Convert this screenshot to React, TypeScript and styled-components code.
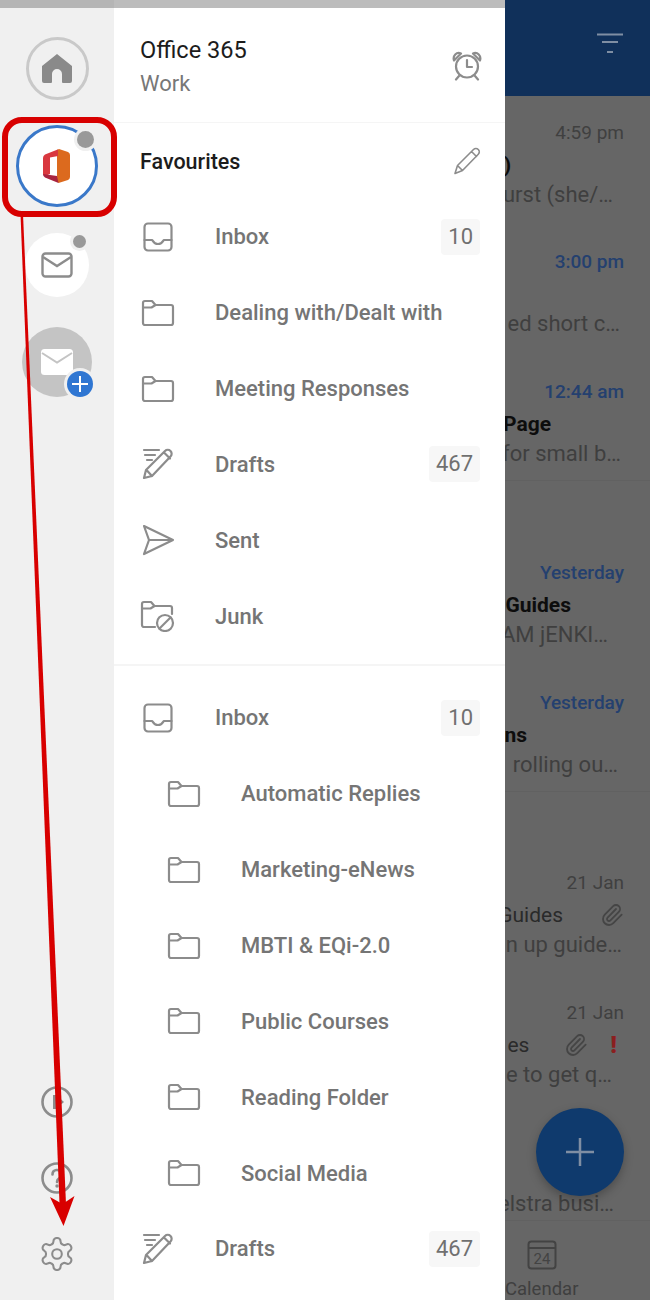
import styled, { createGlobalStyle } from 'styled-components';
import { Paperclip } from 'lucide-react';
import type { ReactNode } from 'react';

const GlobalStyle = createGlobalStyle`
  html, body {
    margin: 0;
    padding: 0;
    background: #ffffff;
  }

  * {
    box-sizing: border-box;
  }
`;

const Page = styled.div`
  position: relative;
  display: flex;
  width: 650px;
  height: 1300px;
  overflow: hidden;
  font-family: Roboto, 'Liberation Sans', sans-serif;
`;

const Rail = styled.aside`
  flex: 0 0 114px;
  display: flex;
  flex-direction: column;
  align-items: center;
  background: #f0f0f0;
`;

const StatusStrip = styled.div<{ $tone: string }>`
  flex: 0 0 8px;
  align-self: stretch;
  background: ${({ $tone }) => $tone};
`;

const RailAccounts = styled.div`
  flex: 1;
  display: flex;
  flex-direction: column;
  align-items: center;
  padding-top: 29px;
`;

const HomeButton = styled.div`
  width: 63px;
  height: 63px;
  border: 3px solid #c9c9c9;
  border-radius: 50%;
  display: flex;
  align-items: center;
  justify-content: center;
`;

const AccountButton = styled.div`
  position: relative;
  width: 82px;
  height: 82px;
  margin-top: 25px;
  border: 3px solid #3a78c9;
  border-radius: 50%;
  background: #ffffff;
  display: flex;
  align-items: center;
  justify-content: center;
`;

const MailButton = styled.div`
  position: relative;
  width: 64px;
  height: 64px;
  margin-top: 26px;
  border-radius: 50%;
  background: #ffffff;
  display: flex;
  align-items: center;
  justify-content: center;
`;

const AddButton = styled.div`
  position: relative;
  width: 70px;
  height: 70px;
  margin-top: 30px;
  border-radius: 50%;
  background: #c4c4c4;
  display: flex;
  align-items: center;
  justify-content: center;
`;

const Dot = styled.span<{ $size: number; $top: number; $right: number }>`
  position: absolute;
  top: ${({ $top }) => $top}px;
  right: ${({ $right }) => $right}px;
  width: ${({ $size }) => $size}px;
  height: ${({ $size }) => $size}px;
  border-radius: 50%;
  background: #999999;
  box-shadow: 0 0 0 3px #f0f0f0;
`;

const PlusBadge = styled.span`
  position: absolute;
  right: -1px;
  bottom: 0;
  width: 26px;
  height: 26px;
  border-radius: 50%;
  background: #2f76d2;
  box-shadow: 0 0 0 3px #f0f0f0;
  display: flex;
  align-items: center;
  justify-content: center;
`;

const RailTools = styled.div`
  display: flex;
  flex-direction: column;
  align-items: center;
  gap: 44px;
  padding-bottom: 30px;
`;

const Drawer = styled.nav`
  flex: 0 0 391px;
  display: flex;
  flex-direction: column;
  background: #ffffff;
`;

const AccountHeader = styled.header`
  height: 115px;
  padding: 26px 23px 0 26px;
  display: flex;
  justify-content: space-between;
  align-items: flex-start;
  border-bottom: 1px solid #f5f5f5;
`;

const AccountName = styled.div`
  font-size: 23.6px;
  line-height: 32px;
  color: #1c1c1c;
`;

const AccountKind = styled.div`
  margin-top: 2px;
  font-size: 22px;
  line-height: 32px;
  color: #777777;
`;

const AlarmSlot = styled.div`
  padding-top: 17px;
`;

const SectionHead = styled.div`
  height: 76px;
  padding: 0 24px 0 26px;
  display: flex;
  align-items: center;
  justify-content: space-between;
  font-size: 21.5px;
  font-weight: 500;
  color: #1c1c1c;
`;

const FolderRow = styled.div<{ $nested?: boolean }>`
  height: 75.85px;
  padding: 0 25px 0 ${({ $nested }) => ($nested ? 52 : 26)}px;
  display: flex;
  align-items: center;
  font-size: 22px;
  font-weight: 500;
  color: #757575;
`;

const IconSlot = styled.span`
  flex: 0 0 36px;
  height: 36px;
  margin-right: 39px;
  display: flex;
  align-items: center;
  justify-content: center;
`;

const FolderName = styled.span`
  flex: 1;
  white-space: nowrap;
`;

const CountBadge = styled.span`
  height: 36px;
  padding: 0 7px;
  border-radius: 4px;
  background: #f7f7f7;
  font-size: 22px;
  font-weight: 400;
  line-height: 36px;
  color: #707070;
`;

const Divider = styled.hr`
  margin: 10px 0 14px;
  border: 0;
  border-top: 2px solid #f5f5f5;
`;

const MessagePane = styled.main`
  position: relative;
  flex: 1;
  min-width: 0;
  display: flex;
  flex-direction: column;
  overflow: hidden;
  background: #666666;
`;

const PaneHeader = styled.div`
  flex: 0 0 96px;
  padding: 33px 26px 0 0;
  display: flex;
  justify-content: flex-end;
  align-items: flex-start;
  background: #10305a;
`;

const MessageRow = styled.article<{ $ruled?: boolean; $first?: boolean }>`
  height: ${({ $first }) => ($first ? 126 : 129.5)}px;
  padding-top: ${({ $first }) => ($first ? 23 : 26)}px;
  display: flex;
  flex-direction: column;
  flex-shrink: 0;
  border-bottom: ${({ $ruled }) => ($ruled ? '1px solid #616161' : '0')};
`;

const GroupGap = styled.div<{ $height: number }>`
  flex: 0 0 ${({ $height }) => $height}px;
`;

const TimeLine = styled.div<{ $unread?: boolean }>`
  height: 28px;
  padding-right: 26px;
  text-align: right;
  font-size: 19px;
  line-height: 28px;
  font-weight: ${({ $unread }) => ($unread ? 500 : 400)};
  color: ${({ $unread }) => ($unread ? '#24406f' : '#404040')};
`;

const TitleLine = styled.div<{ $inset: number; $unread?: boolean; $drop?: number }>`
  height: 30px;
  margin-top: ${({ $drop }) => $drop ?? 3}px;
  padding-right: ${({ $inset }) => $inset}px;
  display: flex;
  justify-content: flex-end;
  align-items: center;
  white-space: nowrap;
  font-size: 21px;
  font-weight: ${({ $unread }) => ($unread ? 700 : 400)};
  color: ${({ $unread }) => ($unread ? '#0d0d0d' : '#2a2a2a')};
`;

const TitleText = styled.span<{ $gap: number }>`
  flex-shrink: 0;
  margin-right: ${({ $gap }) => $gap}px;
`;

const ClipIcon = styled(Paperclip)`
  flex-shrink: 0;
  color: #454545;
`;

const PreviewLine = styled.div<{ $inset: number }>`
  height: 30px;
  padding-right: ${({ $inset }) => $inset}px;
  display: flex;
  justify-content: flex-end;
  white-space: nowrap;
  font-size: 22px;
  line-height: 30px;
  color: #3f3f3f;
`;

const Flag = styled.span`
  flex-shrink: 0;
  margin-left: 22px;
  font-size: 24px;
  font-weight: 900;
  color: #8b1f1f;
`;

const Fab = styled.div`
  position: absolute;
  left: 31px;
  top: 1108px;
  width: 88px;
  height: 88px;
  border-radius: 50%;
  background: #0f3a6d;
  box-shadow: 0 4px 10px rgba(0, 0, 0, 0.25);
  display: flex;
  align-items: center;
  justify-content: center;
`;

const TabBar = styled.footer`
  position: absolute;
  left: 0;
  right: 0;
  top: 1220px;
  height: 80px;
  border-top: 1px solid #616161;
  background: #666666;
  padding-top: 19px;
  display: flex;
  flex-direction: column;
  align-items: flex-start;
`;

const TabIcon = styled.div`
  padding-left: 22px;
  height: 32px;
`;

const TabLabel = styled.div`
  margin-top: 5px;
  font-size: 18.5px;
  line-height: 24px;
  color: #3f3f3f;
`;

const Annotation = styled.svg`
  position: absolute;
  inset: 0;
  pointer-events: none;
`;

const stroke = {
  fill: 'none',
  stroke: '#8c8c8c',
  strokeWidth: 2.2,
  strokeLinecap: 'round' as const,
  strokeLinejoin: 'round' as const,
};

const InboxIcon = () => (
  <svg width="32" height="32" viewBox="0 0 32 32">
    <rect x="2.5" y="2.5" width="27" height="27" rx="3.5" {...stroke} />
    <path d="M2.5 19H10c1 0 1 4 6 4s5-4 6-4h7.5" {...stroke} />
  </svg>
);

const FolderIcon = () => (
  <svg width="34" height="28" viewBox="0 0 34 28">
    <path d="M2 24V4a2 2 0 0 1 2-2h7l3.500 4H30a2 2 0 0 1 2 2v16a2 2 0 0 1-2 2H4a2 2 0 0 1-2-2ZM2 8.500h8.500L14.500 6" {...stroke} />
  </svg>
);

const DraftsIcon = () => (
  <svg width="34" height="34" viewBox="0 0 34 34">
    <path d="M3 3h15M4 8h10M6 13h5" {...stroke} />
    <path d="M3 31l2-8L24 4c1.500-1.500 4-1.500 5.500 0s1.500 4 0 5.500L11 29l-8 2ZM5.500 23l5.500 6M23 5.500l6 6" {...stroke} />
  </svg>
);

const SentIcon = () => (
  <svg width="34" height="34" viewBox="0 0 34 34">
    <path d="M3 3l29 14L3 31l5-14L3 3ZM8 17h24" {...stroke} />
  </svg>
);

const JunkIcon = () => (
  <svg width="36" height="32" viewBox="0 0 36 32">
    <path d="M15 27H4a2 2 0 0 1-2-2V4a2 2 0 0 1 2-2h7l3.500 4H30a2 2 0 0 1 2 2v6M2 8.500h8.500L14.500 6" {...stroke} />
    <circle cx="25" cy="23" r="8" {...stroke} />
    <path d="M19.500 28.500l11-11" {...stroke} />
  </svg>
);

const AlarmIcon = () => (
  <svg width="30" height="30" viewBox="0 0 30 30">
    <circle cx="15" cy="15.500" r="11" {...stroke} />
    <path d="M15 9v7h5M7 25l-3 3.500M23 25l3 3.500" {...stroke} />
    <path d="M2 9.500C0.500 5 4.500 0.500 9 2.500L2 9.500ZM28 9.500C29.500 5 25.500 0.500 21 2.500L28 9.500Z" {...stroke} />
  </svg>
);

const PencilIcon = () => (
  <svg width="28" height="28" viewBox="0 0 28 28">
    <path d="M2 26.500l2.500-8L20.500 2.500c1.300-1.300 3.500-1.300 4.800 0s1.300 3.500 0 4.800L9.500 23.500l-7.500 3ZM4.500 18.500l5 5M18.500 4.500l5 5" {...stroke} strokeWidth="1.600" />
  </svg>
);

const HomeIcon = () => (
  <svg width="32" height="32" viewBox="0 0 32 32">
    <path d="M16 1L1 13v15a2 2 0 0 0 2 2h7a1 1 0 0 0 1-1v-8a5 5 0 0 1 10 0v8a1 1 0 0 0 1 1h7a2 2 0 0 0 2-2V13L16 1Z" fill="#8a8a8a" />
  </svg>
);

const OfficeLogo = () => (
  <svg width="28" height="34" viewBox="0 0 28 34">
    <path d="M14 1L16 0L25 3Q27 4 27 6V28Q27 30 25 31L15.500 34L14 32Z" fill="#dc6a1e" />
    <path d="M16 0L2 5.500Q0 6.500 0 9V25Q0 26.500 2 27L7 25V8.500L15 7V0.500Z" fill="#d9383f" />
    <path d="M0 25L14 27L15.500 34L2 28.500Q0 27.500 0 25Z" fill="#a8243f" />
  </svg>
);

const MailOutline = () => (
  <svg width="32" height="26" viewBox="0 0 32 26">
    <rect x="1.500" y="1.500" width="29" height="23" rx="3" fill="none" stroke="#8c8c8c" strokeWidth="2.400" />
    <path d="M2 5l14 9 14-9" fill="none" stroke="#8c8c8c" strokeWidth="2.400" />
  </svg>
);

const MailFilled = () => (
  <svg width="32" height="26" viewBox="0 0 32 26">
    <rect width="32" height="26" rx="3.500" fill="#ffffff" />
    <path d="M1 4l15 9.500L31 4" fill="none" stroke="#c4c4c4" strokeWidth="2" />
  </svg>
);

const PlayTool = () => (
  <svg width="32" height="32" viewBox="0 0 32 32">
    <circle cx="16" cy="16" r="14.500" {...stroke} strokeWidth="2.600" />
    <path d="M12 9h3l8 7-8 7h-3z" fill="#8c8c8c" />
  </svg>
);

const HelpTool = () => (
  <svg width="32" height="32" viewBox="0 0 32 32">
    <circle cx="16" cy="16" r="14.500" {...stroke} strokeWidth="2.600" />
    <path d="M11.500 12.500a4.500 4.500 0 1 1 6.500 4c-1.500.8-2 1.500-2 3.500" {...stroke} strokeWidth="2.600" />
    <circle cx="16" cy="24" r="1.700" fill="#8c8c8c" />
  </svg>
);

const GearTool = () => (
  <svg width="32" height="32" viewBox="2 2 20 20" overflow="visible">
    <path
      d="M12.220 2h-.44a2 2 0 0 0-2 2v.18a2 2 0 0 1-1 1.730l-.43.250a2 2 0 0 1-2 0l-.15-.080a2 2 0 0 0-2.730.730l-.220.380a2 2 0 0 0 .730 2.730l.150.100a2 2 0 0 1 1 1.720v.510a2 2 0 0 1-1 1.740l-.150.090a2 2 0 0 0-.730 2.730l.220.380a2 2 0 0 0 2.730.730l.150-.080a2 2 0 0 1 2 0l.430.250a2 2 0 0 1 1 1.730V20a2 2 0 0 0 2 2h.440a2 2 0 0 0 2-2v-.18a2 2 0 0 1 1-1.730l.430-.250a2 2 0 0 1 2 0l.150.080a2 2 0 0 0 2.730-.730l.220-.390a2 2 0 0 0-.730-2.730l-.150-.080a2 2 0 0 1-1-1.740v-.500a2 2 0 0 1 1-1.740l.150-.090a2 2 0 0 0 .730-2.730l-.220-.380a2 2 0 0 0-2.730-.730l-.150.080a2 2 0 0 1-2 0l-.430-.250a2 2 0 0 1-1-1.730V4a2 2 0 0 0-2-2z"
      {...stroke}
      strokeWidth="1.300"
    />
    <circle cx="12" cy="12" r="3" {...stroke} strokeWidth="1.300" />
  </svg>
);

const FilterIcon = () => (
  <svg width="28" height="22" viewBox="0 0 28 22">
    <path d="M1 1.500h26M6 9h16M11 19h6" fill="none" stroke="#7f8ea3" strokeWidth="2" />
  </svg>
);

const CalendarIcon = () => (
  <svg width="30" height="30" viewBox="0 0 30 30">
    <rect x="1.500" y="1.500" width="27" height="27" rx="3" fill="none" stroke="#434343" strokeWidth="2" />
    <path d="M1.500 8h27" stroke="#434343" strokeWidth="2" />
    <text x="15" y="24" textAnchor="middle" fontSize="15" fontFamily="Roboto, sans-serif" fill="#434343">24</text>
  </svg>
);

type Folder = { name: string; icon: ReactNode; count?: number; nested?: boolean };

const favourites: Folder[] = [
  { name: 'Inbox', icon: <InboxIcon />, count: 10 },
  { name: 'Dealing with/Dealt with', icon: <FolderIcon /> },
  { name: 'Meeting Responses', icon: <FolderIcon /> },
  { name: 'Drafts', icon: <DraftsIcon />, count: 467 },
  { name: 'Sent', icon: <SentIcon /> },
  { name: 'Junk', icon: <JunkIcon /> },
];

const allFolders: Folder[] = [
  { name: 'Inbox', icon: <InboxIcon />, count: 10 },
  { name: 'Automatic Replies', icon: <FolderIcon />, nested: true },
  { name: 'Marketing-eNews', icon: <FolderIcon />, nested: true },
  { name: 'MBTI & EQi-2.0', icon: <FolderIcon />, nested: true },
  { name: 'Public Courses', icon: <FolderIcon />, nested: true },
  { name: 'Reading Folder', icon: <FolderIcon />, nested: true },
  { name: 'Social Media', icon: <FolderIcon />, nested: true },
  { name: 'Drafts', icon: <DraftsIcon />, count: 467 },
];

function FolderList({ items }: { items: Folder[] }) {
  return (
    <>
      {items.map((item) => (
        <FolderRow key={`${item.name}-${item.count ?? 0}`} $nested={item.nested}>
          <IconSlot>{item.icon}</IconSlot>
          <FolderName>{item.name}</FolderName>
          {item.count !== undefined && <CountBadge>{item.count}</CountBadge>}
        </FolderRow>
      ))}
    </>
  );
}

export default function App() {
  return (
    <Page>
      <GlobalStyle />
      <Rail>
        <StatusStrip $tone="#b5b5b5" />
        <RailAccounts>
          <HomeButton>
            <HomeIcon />
          </HomeButton>
          <AccountButton>
            <OfficeLogo />
            <Dot $size={17} $top={3} $right={1} />
          </AccountButton>
          <MailButton>
            <MailOutline />
            <Dot $size={13} $top={2} $right={3} />
          </MailButton>
          <AddButton>
            <MailFilled />
            <PlusBadge>
              <svg width="18" height="18" viewBox="0 0 18 18">
                <path d="M9 1v16M1 9h16" stroke="#ffffff" strokeWidth="2" />
              </svg>
            </PlusBadge>
          </AddButton>
        </RailAccounts>
        <RailTools>
          <PlayTool />
          <HelpTool />
          <GearTool />
        </RailTools>
      </Rail>

      <Drawer>
        <StatusStrip $tone="#bcbcbc" />
        <AccountHeader>
          <div>
            <AccountName>Office 365</AccountName>
            <AccountKind>Work</AccountKind>
          </div>
          <AlarmSlot>
            <AlarmIcon />
          </AlarmSlot>
        </AccountHeader>
        <SectionHead>
          Favourites
          <PencilIcon />
        </SectionHead>
        <FolderList items={favourites} />
        <Divider />
        <FolderList items={allFolders} />
      </Drawer>

      <MessagePane>
        <PaneHeader>
          <FilterIcon />
        </PaneHeader>
        <MessageRow $first>
          <TimeLine>4:59 pm</TimeLine>
          <TitleLine $inset={139} $unread $drop={3}>
            )
          </TitleLine>
          <PreviewLine $inset={37}>urst (she/…</PreviewLine>
        </MessageRow>
        <MessageRow>
          <TimeLine $unread>3:00 pm</TimeLine>
          <TitleLine $inset={120} $unread />
          <PreviewLine $inset={30}>ed short c…</PreviewLine>
        </MessageRow>
        <MessageRow $ruled>
          <TimeLine $unread>12:44 am</TimeLine>
          <TitleLine $inset={99} $unread>
            Page
          </TitleLine>
          <PreviewLine $inset={29}>for small b…</PreviewLine>
        </MessageRow>
        <GroupGap $height={52} />
        <MessageRow>
          <TimeLine $unread>Yesterday</TimeLine>
          <TitleLine $inset={79} $unread>
            Guides
          </TitleLine>
          <PreviewLine $inset={42}>AM jENKI…</PreviewLine>
        </MessageRow>
        <MessageRow $ruled>
          <TimeLine $unread>Yesterday</TimeLine>
          <TitleLine $inset={123} $unread>
            ns
          </TitleLine>
          <PreviewLine $inset={32}>rolling ou…</PreviewLine>
        </MessageRow>
        <GroupGap $height={51} />
        <MessageRow>
          <TimeLine>21 Jan</TimeLine>
          <TitleLine $inset={26}>
            <TitleText $gap={37}>Guides</TitleText>
            <ClipIcon size={24} strokeWidth={1.8} />
          </TitleLine>
          <PreviewLine $inset={28}>n up guide…</PreviewLine>
        </MessageRow>
        <MessageRow>
          <TimeLine>21 Jan</TimeLine>
          <TitleLine $inset={33}>
            <TitleText $gap={35}>es</TitleText>
            <ClipIcon size={24} strokeWidth={1.8} />
            <Flag>!</Flag>
          </TitleLine>
          <PreviewLine $inset={38}>e to get q…</PreviewLine>
        </MessageRow>
        <MessageRow>
          <TimeLine />
          <TitleLine $inset={30} />
          <PreviewLine $inset={36}>elstra busi…</PreviewLine>
        </MessageRow>
        <TabBar>
          <TabIcon>
            <CalendarIcon />
          </TabIcon>
          <TabLabel>Calendar</TabLabel>
        </TabBar>
        <Fab>
          <svg width="30" height="30" viewBox="0 0 30 30">
            <path d="M15 1v28M1 15h28" stroke="#7f8ea3" strokeWidth="2.500" />
          </svg>
        </Fab>
      </MessagePane>

      <Annotation width="650" height="1300" viewBox="0 0 650 1300">
        <rect x="5" y="120" width="109" height="94" rx="17" fill="none" stroke="#d80000" strokeWidth="6" />
        <path d="M20.500 214L23 214L66 1204L59.500 1204Z" fill="#d80000" />
        <path d="M50 1197L62.500 1204L74.500 1196L63.500 1226Z" fill="#d80000" />
      </Annotation>
    </Page>
  );
}
